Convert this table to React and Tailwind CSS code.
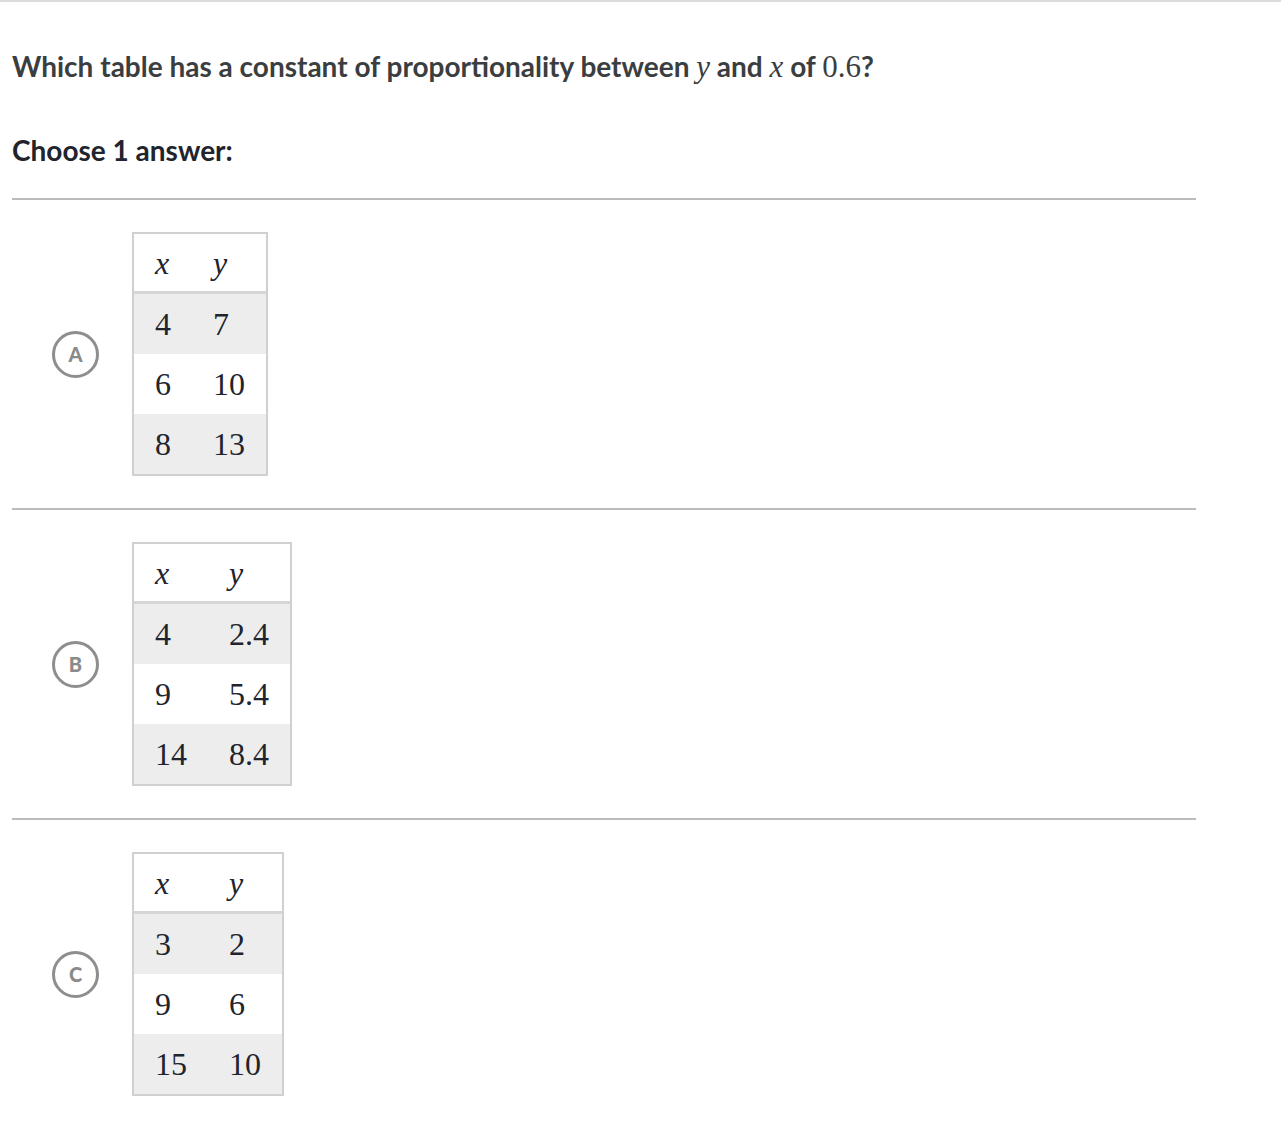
import React from 'react';

const sans = { fontFamily: 'Lato, "Open Sans", sans-serif' };
const math = { fontFamily: '"Liberation Serif", "DejaVu Serif", serif' };

const options = [
    { letter: 'A', rows: [['4', '7'], ['6', '10'], ['8', '13']] },
    { letter: 'B', rows: [['4', '2.4'], ['9', '5.4'], ['14', '8.4']] },
    { letter: 'C', rows: [['3', '2'], ['9', '6'], ['15', '10']] },
];

const Var = ({ children }) => (
    <span className="italic" style={math}>{children}</span>
);

const ValueTable = ({ rows }) => (
    <table
        className="border-2 border-[#d0d0d0] border-separate border-spacing-0 text-[32px] leading-none text-[#21242c]"
        style={math}
    >
        <thead>
            <tr className="bg-white">
                <th className="h-[60px] px-[21px] border-b-[3px] border-[#d6d6d6] text-left font-normal italic">x</th>
                <th className="h-[60px] px-[21px] border-b-[3px] border-[#d6d6d6] text-left font-normal italic">y</th>
            </tr>
        </thead>
        <tbody>
            {rows.map((r, i) => (
                <tr key={i} className={i % 2 === 0 ? 'bg-[#ededed]' : 'bg-white'}>
                    <td className="h-[60px] px-[21px] text-left">{r[0]}</td>
                    <td className="h-[60px] px-[21px] text-left">{r[1]}</td>
                </tr>
            ))}
        </tbody>
    </table>
);

const Option = ({ letter, rows }) => (
    <div className="flex items-center border-t-2 border-[#bbbbbb] py-[32px]">
        <div className="w-[120px] pl-[40px]">
            <div
                className="w-[47px] h-[47px] rounded-full border-[3px] border-[#8e8e8e] flex items-center justify-center text-[20px] leading-none font-black text-[#8a8a8a]"
                style={sans}
            >
                {letter}
            </div>
        </div>
        <ValueTable rows={rows} />
    </div>
);

const App = () => {
    return (
        <div className="min-h-screen bg-white" style={sans}>
            <div className="h-[2px] bg-[#dcdcdc]" />
            <div className="px-3 w-[1208px]">
                <p className="pt-[47px] text-[28px] leading-[32px] font-bold text-[#3b3e40]">
                    Which table has a constant of proportionality between{' '}
                    <span className="text-[31px] font-normal"><Var>y</Var></span> and{' '}
                    <span className="text-[31px] font-normal"><Var>x</Var></span> of{' '}
                    <span className="text-[31px] font-normal" style={math}>0.6</span>?
                </p>
                <p className="mt-[51px] mb-[32px] text-[28px] leading-[32px] font-bold text-[#21242c]">
                    Choose 1 answer:
                </p>
                {options.map((o) => (
                    <Option key={o.letter} letter={o.letter} rows={o.rows} />
                ))}
            </div>
        </div>
    );
};

export default App;
